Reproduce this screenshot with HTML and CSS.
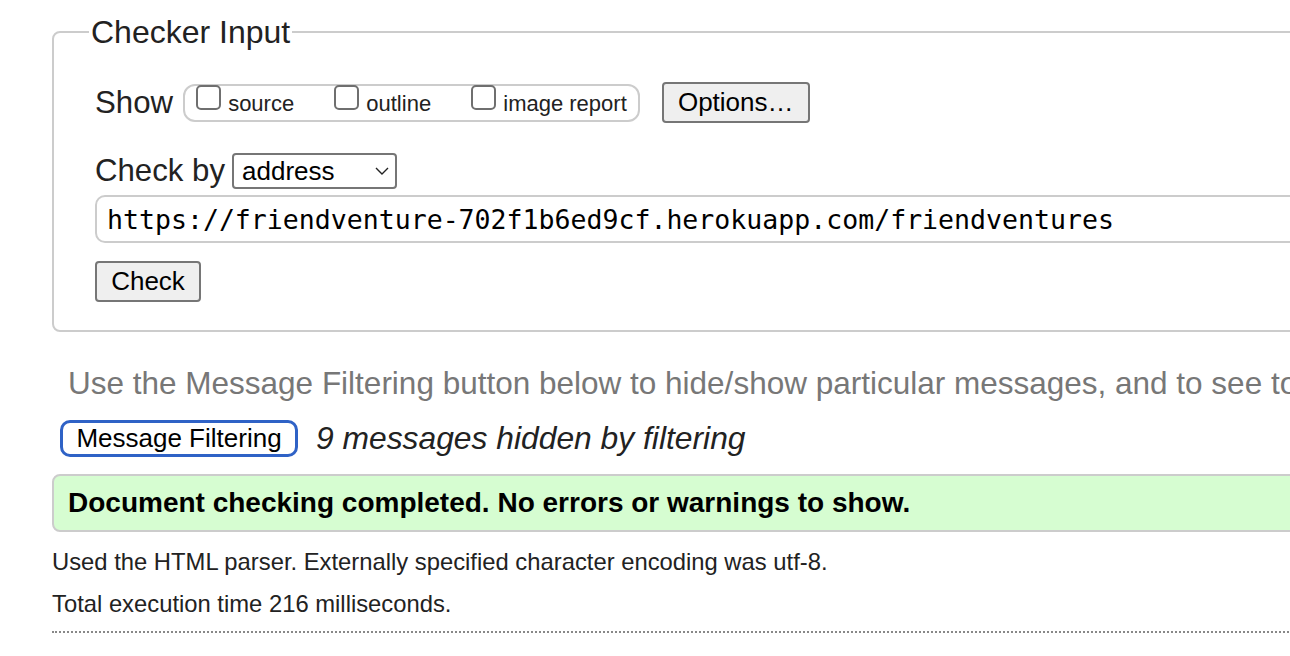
FILE: index.html
```html
<!DOCTYPE html>
<html lang="en">
<head>
<meta charset="utf-8">
<title>Nu Html Checker</title>
<link rel="stylesheet" href="styles.css">
</head>
<body>
<div class="page">
  <form class="checker">
    <fieldset class="checker-fieldset">
      <legend class="checker-legend">Checker Input</legend>
      <div class="row show-row">
        <span class="row-label">Show</span>
        <div class="show-group">
          <label class="opt"><input type="checkbox" class="cb"> source</label>
          <label class="opt"><input type="checkbox" class="cb"> outline</label>
          <label class="opt last"><input type="checkbox" class="cb"> image report</label>
        </div>
        <button type="button" class="btn options-btn">Options…</button>
      </div>
      <div class="row checkby-row">
        <span class="row-label">Check by</span>
        <span class="select-wrap">
          <select class="select">
            <option>address</option>
          </select>
          <svg class="chev" width="14" height="8" viewBox="0 0 14 8"><path d="M1 1 L7 7 L13 1" fill="none" stroke="#222" stroke-width="1.4"/></svg>
        </span>
      </div>
      <div class="row url-row">
        <input class="url" type="text" value="https://friendventure-702f1b6ed9cf.herokuapp.com/friendventures">
      </div>
      <div class="row submit-row">
        <button type="button" class="btn check-btn">Check</button>
      </div>
    </fieldset>
  </form>

  <p class="hint">Use the Message Filtering button below to hide/show particular messages, and to see total counts of errors and warnings.</p>

  <div class="filter-row">
    <button type="button" class="filter-btn">Message Filtering</button>
    <span class="hidden-count">9 messages hidden by filtering</span>
  </div>

  <div class="success">Document checking completed. No errors or warnings to show.</div>

  <p class="details">Used the HTML parser. Externally specified character encoding was utf-8.</p>
  <p class="details time">Total execution time 216 milliseconds.</p>

  <div class="dotted"></div>
</div>
</body>
</html>
```

FILE: styles.css
```css
html, body {
  margin: 0;
  padding: 0;
  overflow: hidden;
  background: #ffffff;
}

body {
  font-family: "Liberation Sans", Arial, sans-serif;
  color: #222222;
}

.page {
  padding-left: 52px;
  width: 1400px;
}

.checker {
  margin: 0;
}

.checker-fieldset {
  margin: 14px 0 0 0;
  width: 1300px;
  box-sizing: border-box;
  border: 2px solid #cccccc;
  border-radius: 8px;
  padding: 0 0 28px 35px;
  min-width: 0;
}

.checker-legend {
  font-size: 32px;
  line-height: 36px;
  padding: 0 2px;
  color: #222222;
}

.row {
  margin-left: 6px;
  display: flex;
  align-items: center;
}

.row-label {
  font-size: 31.2px;
  line-height: 36px;
  color: #222222;
  white-space: nowrap;
}

.show-row {
  margin-top: 32px;
  height: 41px;
}

.show-group {
  margin-left: 10px;
  height: 38px;
  box-sizing: border-box;
  border: 2px solid #cccccc;
  border-radius: 12px;
  padding: 0 11px 4px 11px;
  display: flex;
  align-items: center;
  white-space: nowrap;
}

.opt {
  display: inline-block;
  font-size: 22px;
  line-height: 26px;
  color: #222222;
  margin-right: 40px;
}

.opt.last {
  margin-right: 0;
}

.cb {
  -webkit-appearance: none;
  appearance: none;
  width: 25px;
  height: 25px;
  box-sizing: border-box;
  border: 2px solid #6f6f6f;
  border-radius: 5px;
  margin: 0 1px 1px 0;
  vertical-align: baseline;
  background: #ffffff;
}

.btn {
  font-family: "Liberation Sans", Arial, sans-serif;
  font-size: 26px;
  color: #000000;
  background: #efefef;
  border: 2px solid #767676;
  border-radius: 4px;
  height: 41px;
  box-sizing: border-box;
  padding: 0;
}

.options-btn {
  margin-left: 22px;
  width: 148px;
}

.checkby-row {
  margin-top: 30px;
  height: 36px;
}

.select-wrap {
  position: relative;
  margin-left: 7px;
  display: inline-block;
  height: 36px;
}

.select {
  -webkit-appearance: none;
  appearance: none;
  width: 165px;
  height: 36px;
  box-sizing: border-box;
  border: 2px solid #767676;
  border-radius: 4px;
  background: #ffffff;
  font-family: "Liberation Sans", Arial, sans-serif;
  font-size: 26px;
  color: #000000;
  padding: 0 0 0 8px;
}

.chev {
  position: absolute;
  right: 8px;
  top: 14px;
  pointer-events: none;
}

.url-row {
  margin-top: 6px;
}

.url {
  width: 1250px;
  height: 48px;
  box-sizing: border-box;
  border: 2px solid #cccccc;
  border-radius: 10px;
  padding: 0 0 0 10px;
  font-family: "DejaVu Sans Mono", "Liberation Mono", monospace;
  font-size: 26.55px;
  color: #000000;
  background: #ffffff;
}

.submit-row {
  margin-top: 18px;
}

.check-btn {
  width: 106px;
}

.hint {
  margin: 31px 0 0 16px;
  font-size: 31.5px;
  line-height: 40px;
  color: #777777;
  white-space: nowrap;
}

.filter-row {
  margin: 17px 0 0 8px;
  display: flex;
  align-items: center;
  height: 37px;
}

.filter-btn {
  height: 37px;
  box-sizing: border-box;
  border: 3px solid #2f62c6;
  border-radius: 10px;
  background: #ffffff;
  font-family: "Liberation Sans", Arial, sans-serif;
  font-size: 26px;
  color: #000000;
  padding: 0 11px;
  width: 238px;
}

.hidden-count {
  margin-left: 18px;
  font-size: 31.8px;
  font-style: italic;
  color: #222222;
  white-space: nowrap;
}

.success {
  margin-top: 17px;
  width: 1300px;
  height: 58px;
  box-sizing: border-box;
  border: 2px solid #cccccc;
  border-radius: 8px;
  background: #d6fdd1;
  padding-left: 14px;
  font-size: 28px;
  font-weight: bold;
  line-height: 54px;
  color: #000000;
  white-space: nowrap;
}

.details {
  margin: 15px 0 0 0;
  font-size: 23.8px;
  line-height: 30px;
  color: #222222;
  white-space: nowrap;
}

.details.time {
  margin-top: 12px;
}

.dotted {
  margin-top: 12px;
  width: 1300px;
  border-top: 2px dotted #888888;
}
```
